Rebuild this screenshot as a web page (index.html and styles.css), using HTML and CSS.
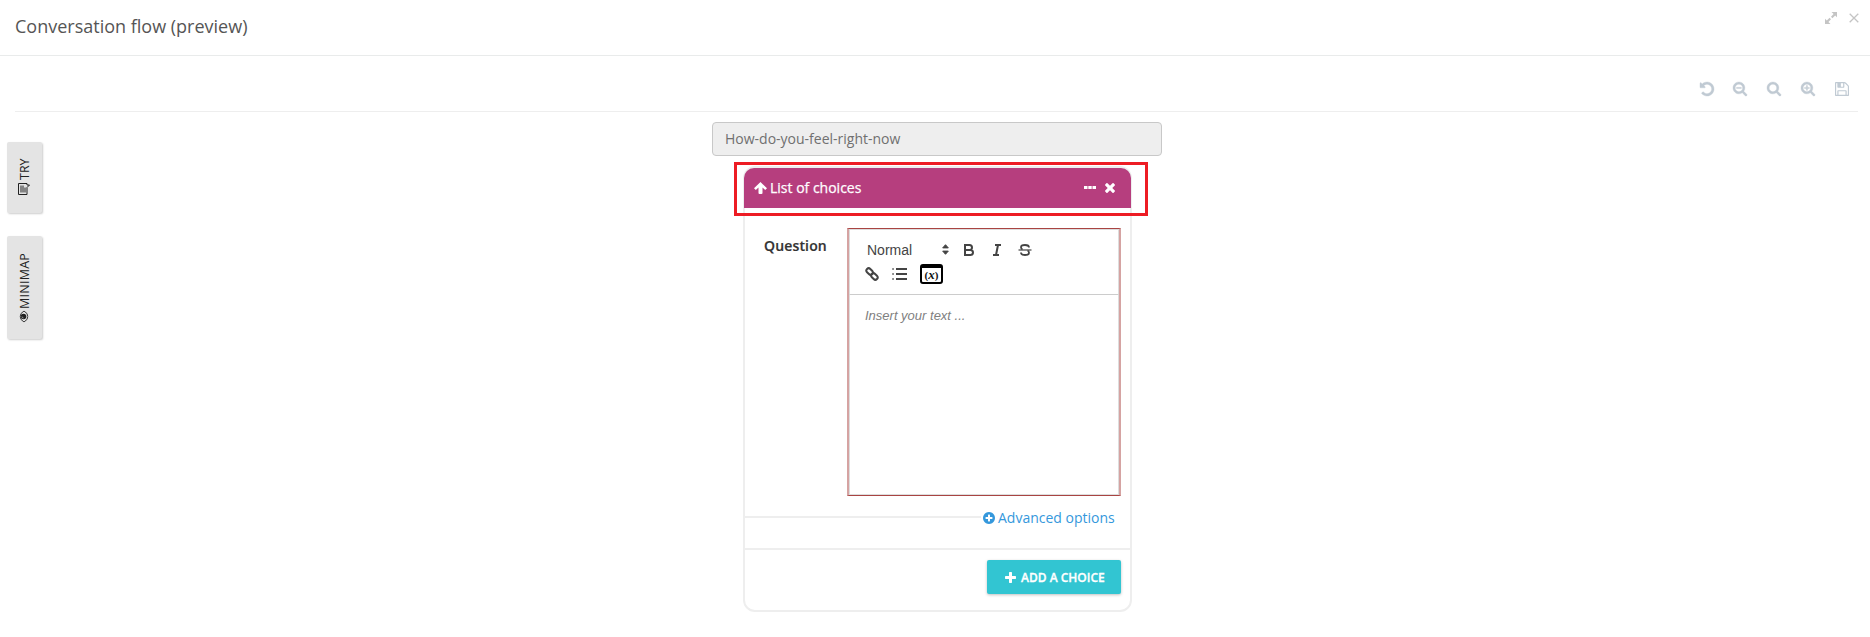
FILE: index.html
```html
<!DOCTYPE html>
<html lang="en">
<head>
<meta charset="utf-8">
<title>Conversation flow (preview)</title>
<link rel="stylesheet" href="styles.css">
</head>
<body>
<header class="header">
  <h1 class="title">Conversation flow (preview)</h1>
  <div class="window-tools">
    <svg width="12" height="12" viewBox="0 0 12 12"><path fill="currentColor" d="M6.500 0H12v5.300L10.200 3.600 7.400 6.300 6 4.800 8.600 2zM5.500 12H0V6.700L1.800 8.400 4.600 5.700 6 7.200 3.400 10z"/></svg>
    <svg width="10" height="10" viewBox="0 0 10 10"><path fill="none" stroke="currentColor" stroke-width="1.300" d="M.7.700l8.600 8.600M9.300.7L.7 9.300"/></svg>
  </div>
</header>
<nav class="toolbar">
  <svg class="tool" viewBox="128 128 1536 1536"><path d="M1664 896q0 156-61 298t-164 245-245 164-298 61q-172 0-327-72.500t-264-204.500q-7-10-6.500-22.500t8.500-20.500l137-138q10-9 25-9 16 2 23 12 73 95 179 147t225 52q104 0 198.500-40.500t163.500-109.500 109.500-163.500 40.500-198.500-40.500-198.500-109.500-163.500-163.500-109.500-198.500-40.500q-98 0-188 35.500t-160 101.500l137 138q31 30 14 69-17 40-59 40h-448q-26 0-45-19t-19-45v-448q0-42 40-59 39-17 69 14l130 129q107-101 244.500-156.500t284.500-55.500q156 0 298 61t245 164 164 245 61 298z"/></svg>
  <svg class="tool" viewBox="64 128 1664 1664"><path d="M1216 832q0-185-131.500-316.500t-316.500-131.500-316.500 131.500-131.500 316.500 131.500 316.500 316.500 131.500 316.500-131.500 131.500-316.500zm512 832q0 52-38 90t-90 38q-54 0-90-38l-343-342q-179 124-399 124-143 0-273.500-55.500t-225-150-150-225-55.500-273.500 55.500-273.500 150-225 225-150 273.500-55.500 273.500 55.500 225 150 150 225 55.500 273.500q0 220-124 399l343 343q37 37 37 90z"/><path d="M480 768h576v128H480z"/></svg>
  <svg class="tool" viewBox="64 128 1664 1664"><path d="M1216 832q0-185-131.500-316.500t-316.500-131.500-316.500 131.500-131.500 316.500 131.500 316.500 316.500 131.500 316.500-131.500 131.500-316.500zm512 832q0 52-38 90t-90 38q-54 0-90-38l-343-342q-179 124-399 124-143 0-273.500-55.500t-225-150-150-225-55.500-273.500 55.500-273.500 150-225 225-150 273.500-55.500 273.500 55.500 225 150 150 225 55.500 273.500q0 220-124 399l343 343q37 37 37 90z"/></svg>
  <svg class="tool" viewBox="64 128 1664 1664"><path d="M1216 832q0-185-131.500-316.500t-316.500-131.500-316.500 131.500-131.500 316.500 131.500 316.500 316.500 131.500 316.500-131.500 131.500-316.500zm512 832q0 52-38 90t-90 38q-54 0-90-38l-343-342q-179 124-399 124-143 0-273.500-55.500t-225-150-150-225-55.500-273.500 55.500-273.500 150-225 225-150 273.500-55.500 273.500 55.500 225 150 150 225 55.500 273.500q0 220-124 399l343 343q37 37 37 90z"/><path d="M480 768h224V544h128v224h224v128H832v224H704V896H480z"/></svg>
  <svg class="tool" viewBox="128 128 1536 1536"><path d="M512 1536h768v-384h-768v384zm896 0h128v-896q0-14-10-38.500t-20-34.500l-281-281q-10-10-34-20t-39-10v416q0 40-28 68t-68 28h-576q-40 0-68-28t-28-68v-416h-128v1280h128v-416q0-40 28-68t68-28h832q40 0 68 28t28 68v416zm-384-928v-320q0-13-9.500-22.500t-22.500-9.500h-192q-13 0-22.500 9.500t-9.500 22.500v320q0 13 9.500 22.500t22.500 9.500h192q13 0 22.500-9.500t9.500-22.500zm640 32v928q0 40-28 68t-68 28h-1344q-40 0-68-28t-28-68v-1344q0-40 28-68t68-28h928q40 0 88 20t76 48l280 280q28 28 48 76t20 88z"/></svg>
</nav>
<main class="workspace">
  <aside class="tabs">
    <button class="tab tab-try">
      <svg width="12" height="12" viewBox="0 0 12 12"><path fill="none" stroke="currentColor" d="M.5.500h11v8.500H10v2.500L7.500 9h-7z"/><path stroke="currentColor" d="M2.500 3h7M2.500 5h7M2.500 7h5"/></svg>
      <span>TRY</span>
    </button>
    <button class="tab tab-map">
      <svg width="12" height="9" viewBox="0 0 12 9"><path fill="none" stroke="currentColor" stroke-width=".9" d="M.5 4.500Q2.700.6 6 .6t5.500 3.900Q9.300 8.400 6 8.400T.5 4.500z"/><circle cx="6" cy="4" r="2.800" fill="currentColor"/><path fill="none" stroke="#e4e4e4" stroke-width=".6" d="M4.500 4q0-1.500 1.500-1.500"/></svg>
      <span>MINIMAP</span>
    </button>
  </aside>
  <section class="flow">
    <div class="node-name">How-do-you-feel-right-now</div>
    <article class="card">
      <header class="card-head">
        <svg class="arrow" width="13" height="12" viewBox="0 0 13 12"><path fill="currentColor" d="M6.500 0L13 6.300 11.200 8.100 8.500 5.600V11q0 1-1 1H5.500q-1 0-1-1V5.600L1.800 8.100 0 6.300z"/></svg>
        <span class="card-title">List of choices</span>
        <svg class="dots" width="12" height="3" viewBox="0 0 12 3"><path fill="currentColor" d="M0 0h3.500v3H0zM4.300 0h3.400v3H4.300zM8.500 0H12v3H8.500z"/></svg>
        <svg width="10" height="10" viewBox="302 302 1188 1188"><path fill="currentColor" d="M1490 1322q0 40-28 68l-136 136q-28 28-68 28t-68-28l-294-294-294 294q-28 28-68 28t-68-28l-136-136q-28-28-28-68t28-68l294-294-294-294q-28-28-28-68t28-68l136-136q28-28 68-28t68 28l294 294 294-294q28-28 68-28t68 28l136 136q28 28 28 68t-28 68l-294 294 294 294q28 28 28 68z" transform="translate(0 -64)"/></svg>
      </header>
      <div class="field">
        <label class="label">Question</label>
        <div class="editor">
          <div class="format-bar">
            <div class="format-row">
              <span class="picker">Normal</span>
              <svg class="sort" width="7" height="11" viewBox="0 0 7 11"><path fill="#444" stroke="#444" stroke-linejoin="round" d="M3.500.7L6.300 3.900H.7zM3.500 10.300L.7 7.100h5.600z"/></svg>
              <svg class="fmt" viewBox="0 0 18 18"><path d="M5 4h4.500a2.500 2.500 0 010 5H5zM5 9h5.500a2.500 2.500 0 010 5H5z"/></svg>
              <svg class="fmt" viewBox="0 0 18 18"><path d="M7 4h6M5 14h6M8 14l2-10"/></svg>
              <svg class="fmt" viewBox="0 0 18 18"><path stroke-width="1.200" d="M2.500 9h13"/><path stroke-width="1.800" d="M13 6.500Q13 4 9 4T5 6.300q0 1.500 1.500 2.200M11.500 9.500q1.500.7 1.500 2.200Q13 14 9 14t-4-2.500"/></svg>
            </div>
            <div class="format-row second">
              <svg class="link" width="14" height="14" viewBox="0 0 14 14"><g fill="none" stroke="#444" stroke-width="2"><rect x="1" y="2.200" width="7.200" height="4.600" rx="2.300" transform="rotate(45 4.600 4.500)"/><rect x="5.800" y="7.200" width="7.200" height="4.600" rx="2.300" transform="rotate(45 9.400 9.500)"/></g></svg>
              <svg class="list" width="15" height="12" viewBox="0 0 15 12"><path stroke="#444" stroke-width="2" d="M4 1h11M4 6h11M4 11h11"/><path stroke="#444" stroke-width="1.500" d="M.3 1h1.500M.3 6h1.500M.3 11h1.500"/></svg>
              <span class="variable">(<i>x</i>)</span>
            </div>
          </div>
          <div class="text-area">Insert your text ...</div>
        </div>
      </div>
      <div class="advanced">
        <span class="rule"></span>
        <a class="advanced-link"><svg width="12" height="12" viewBox="128 128 1536 1536"><path fill="currentColor" d="M1344 960v-128q0-26-19-45t-45-19h-256v-256q0-26-19-45t-45-19h-128q-26 0-45 19t-19 45v256h-256q-26 0-45 19t-19 45v128q0 26 19 45t45 19h256v256q0 26 19 45t45 19h128q26 0 45-19t19-45v-256h256q26 0 45-19t19-45zm320-64q0 209-103 385.500t-279.500 279.500-385.500 103-385.500-103-279.500-279.500-103-385.500 103-385.500 279.500-279.500 385.500-103 385.500 103 279.500 279.500 103 385.500z"/></svg><span>Advanced options</span></a>
      </div>
      <footer class="card-foot">
        <button class="add"><svg width="11" height="11" viewBox="192 128 1408 1408"><path fill="currentColor" d="M1600 736v192q0 40-28 68t-68 28h-416v416q0 40-28 68t-68 28h-192q-40 0-68-28t-28-68v-416h-416q-40 0-68-28t-28-68v-192q0-40 28-68t68-28h416v-416q0-40 28-68t68-28h192q40 0 68 28t28 68v416h416q40 0 68 28t28 68z"/></svg><span>ADD A CHOICE</span></button>
      </footer>
      <div class="highlight"></div>
    </article>
  </section>
</main>
</body>
</html>
```
FILE: styles.css
```css
* { box-sizing: border-box; }
body {
  margin: 0;
  height: 637px;
  overflow: hidden;
  background: #fff;
  color: #333;
  font: 14px/20px "Open Sans", "Noto Sans", sans-serif;
}
svg { display: block; flex: none; }
button { border: 0; padding: 0; font-family: inherit; }

.header {
  display: flex;
  justify-content: space-between;
  height: 56px;
  padding: 12px 11px 0 15px;
  border-bottom: 1px solid #e9ebeb;
}
.title { margin: 0; font-size: 18px; line-height: 28px; font-weight: 400; color: #555; }
.window-tools { display: flex; gap: 12px; color: #c4c4c4; }
.window-tools svg:last-child { margin-top: 1px; }

.toolbar {
  display: flex;
  justify-content: flex-end;
  gap: 20px;
  height: 56px;
  margin: 0 12px 0 15px;
  padding: 26px 9px 0 0;
  border-bottom: 1px solid #eee;
}
.tool { width: 14px; height: 14px; overflow: visible; fill: #c0cad3; stroke: #c0cad3; stroke-width: 40; }
.tool:first-child { margin-right: -1px; }
.tool:last-child { stroke: none; }

.workspace { display: flex; }
.tabs { display: flex; flex-direction: column; gap: 23px; width: 712px; padding: 30px 0 0 7px; }
.tab {
  display: flex;
  align-items: center;
  width: 35px;
  writing-mode: vertical-rl;
  transform: rotate(180deg);
  background: #e4e4e4;
  color: #222;
  border-radius: 2px;
  box-shadow: -1px -1px 2px rgba(0, 0, 0, .2);
  font-size: 12.5px;
  line-height: 35px;
}
.tab svg { transform: rotate(90deg); }
.tab-try { height: 71px; padding-top: 18px; gap: 3px; }
.tab-map { height: 103px; padding-top: 18px; gap: 3px; letter-spacing: .25px; }

.flow { width: 450px; padding-top: 10px; }
.node-name {
  height: 34px;
  padding: 0 12px;
  border: 1px solid #c8c8c8;
  border-radius: 4px;
  background: #eee;
  color: #707070;
  line-height: 32px;
}
.card {
  position: relative;
  width: 389px;
  height: 446px;
  margin: 10px 0 0 31px;
  border: 2px solid #eee;
  border-radius: 12px;
}
.card-head {
  display: flex;
  align-items: center;
  height: 40px;
  margin: 0 -1px;
  padding: 0 16px 0 10px;
  border-radius: 10px 10px 0 0;
  background: #b63e7e;
  color: #fff;
}
.arrow { margin-right: 3px; }
.card-title { flex: 1; -webkit-text-stroke: .25px #fff; }
.dots { margin: 0 9px 2px 0; }
.field { display: flex; padding: 20px 9px 0 19px; }
.label { width: 83px; padding-top: 8px; font-weight: 600; letter-spacing: .15px; -webkit-text-stroke: .2px #333; }
.editor {
  width: 274px;
  height: 268px;
  border: 1px solid #a94442;
  border-left: 2px solid #d5a3a2;
  border-right: 2px solid #d5a3a2;
  font-family: "Liberation Sans", Arial, sans-serif;
  color: #444;
}
.format-bar {
  height: 66px;
  padding: 10px 0 0 17px;
  border: 1px solid #ddd;
  border-bottom-color: #ccc;
}
.format-row { display: flex; align-items: center; height: 19px; }
.picker { width: 75px; }
.sort { margin-right: 11px; }
.fmt { width: 18px; height: 18px; margin-right: 10px; fill: none; stroke: #444; stroke-width: 2; }
.second { height: 20px; margin-top: 5px; }
.link { margin-left: -2px; }
.list { margin: 0 13px 0 13px; }
.variable {
  width: 23px;
  height: 20px;
  border: 2px solid #000;
  border-top-width: 4px;
  border-radius: 3px;
  color: #111;
  font: bold 11px/13px "Liberation Serif", serif;
  text-align: center;
}
.variable i { font-size: 13px; }
.text-area {
  height: 200px;
  padding: 12px 15px;
  border: 1px solid #ddd;
  border-top: 0;
  color: #808080;
  font-size: 13px;
  line-height: 18px;
  font-style: italic;
}
.advanced { display: flex; align-items: flex-start; height: 41px; margin-top: 11px; }
.rule { width: 236px; height: 2px; margin: 9px 2px 0 0; background: #eee; }
.advanced-link { display: flex; align-items: center; gap: 3px; height: 22px; color: #3598dc; }
.card-foot { display: flex; justify-content: flex-end; padding: 10px 9px 0 0; border-top: 2px solid #eee; }
.add {
  display: flex;
  align-items: center;
  gap: 5px;
  width: 134px;
  height: 34px;
  padding-left: 18px;
  background: #32c5d2;
  color: #fff;
  border-radius: 2px;
  box-shadow: 0 1px 3px rgba(0, 0, 0, .25);
  font-size: 12px;
  font-weight: 600;
  -webkit-text-stroke: .3px #fff;
}
.highlight {
  position: absolute;
  left: -11px;
  top: -6px;
  width: 414px;
  height: 54px;
  border: 3px solid #ed1c24;
}
```
